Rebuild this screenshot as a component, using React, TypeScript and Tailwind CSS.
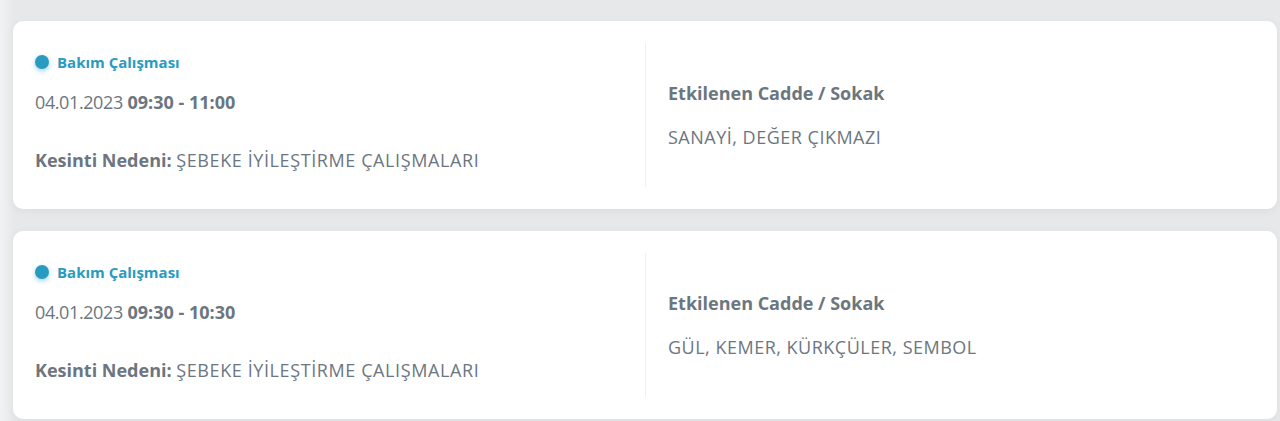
const outages = [
  {
    date: "04.01.2023",
    time: "09:30 - 11:00",
    reason: "ŞEBEKE İYİLEŞTİRME ÇALIŞMALARI",
    streets: "SANAYİ, DEĞER ÇIKMAZI",
  },
  {
    date: "04.01.2023",
    time: "09:30 - 10:30",
    reason: "ŞEBEKE İYİLEŞTİRME ÇALIŞMALARI",
    streets: "GÜL, KEMER, KÜRKÇÜLER, SEMBOL",
  },
];

function OutageCard({ date, time, reason, streets }: (typeof outages)[number]) {
  return (
    <div className="flex h-[188px] rounded-[10px] bg-white px-[22px] py-[22px] shadow-[0_2px_10px_rgba(0,0,0,0.05)]">
      <div className="flex w-1/2 flex-col pt-[8px]">
        <div className="flex h-[22px] items-center gap-[8px]">
          <span className="h-[14px] w-[14px] rounded-full bg-[#2a9bc0] shadow-[0_2px_5px_rgba(42,155,192,0.45)]" />
          <span className="text-[15px] font-bold text-[#2a9bc0]">Bakım Çalışması</span>
        </div>
        <p className="mt-[16px] text-[18px] leading-[26px] text-[#6c7680]">
          <span className="tracking-[-0.4px]">{date}</span> <span className="font-bold">{time}</span>
        </p>
        <p className="mt-[32px] text-[18px] leading-[26px] text-[#6c7680]">
          <span className="font-bold">Kesinti Nedeni:</span>{" "}
          <span className="tracking-[0.6px]">{reason}</span>
        </p>
      </div>
      <div className="flex w-1/2 flex-col justify-center border-l border-[#eceef0] pl-[22px]">
        <p className="text-[18px] font-bold leading-[26px] text-[#6c7680]">Etkilenen Cadde / Sokak</p>
        <p className="mt-[18px] text-[18px] leading-[26px] tracking-[0.5px] text-[#6c7680]">{streets}</p>
      </div>
    </div>
  );
}

export default function App() {
  return (
    <div
      className="h-[421px] bg-[linear-gradient(90deg,#f1f2f3_0px,#e6e8ea_14px,#e6e8ea_100%)] pl-[13px] pr-[3px] pt-[21px]"
      style={{ fontFamily: '"Open Sans", "Noto Sans", sans-serif' }}
    >
      <div className="flex flex-col gap-[22px]">
        {outages.map((o, i) => (
          <OutageCard key={i} {...o} />
        ))}
      </div>
    </div>
  );
}
